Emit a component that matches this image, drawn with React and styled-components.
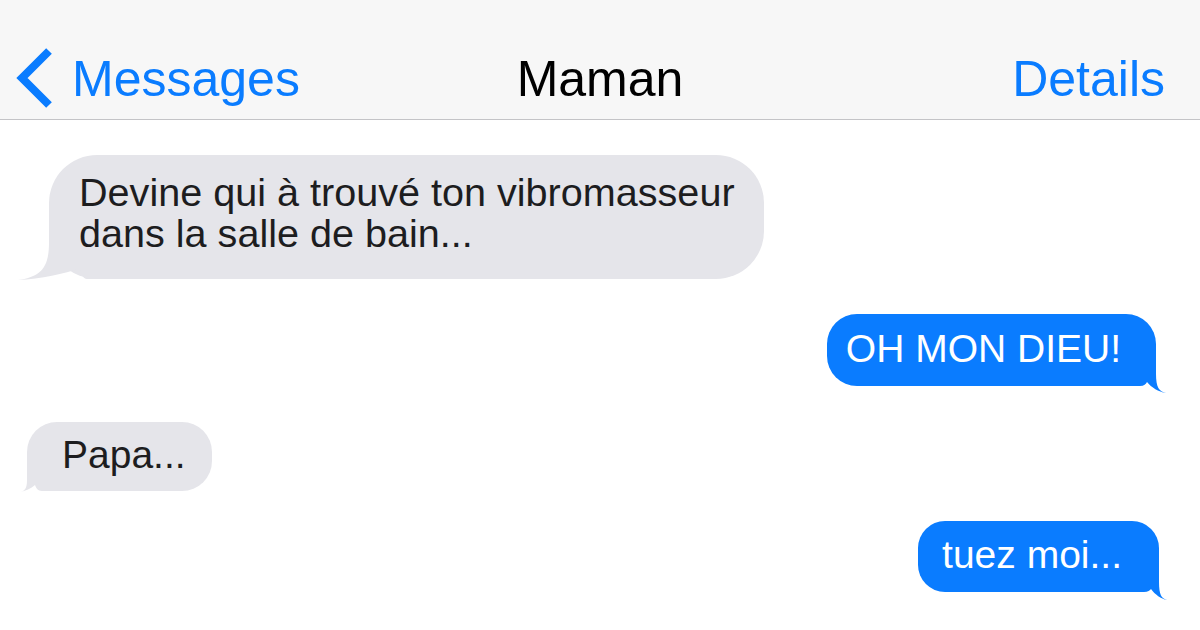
import React from "react";
import styled, { createGlobalStyle } from "styled-components";

const Global = createGlobalStyle`
  html, body { margin: 0; padding: 0; background: #ffffff; }
  body {
    font-family: "Liberation Sans", Arial, Helvetica, sans-serif;
    -webkit-font-smoothing: antialiased;
  }
`;

const BLUE = "#0a7cff";
const GRAY = "#e5e5ea";

const Screen = styled.div`
  width: 1200px;
  height: 630px;
  overflow: hidden;
  background: #ffffff;
`;

const Header = styled.header`
  box-sizing: border-box;
  height: 120px;
  padding: 46px 15px 9px 15px;
  background: #f7f7f7;
  border-bottom: 1px solid #c4c4c7;
  display: grid;
  grid-template-columns: minmax(0, 1fr) auto minmax(0, 1fr);
  align-items: center;
`;

const Back = styled.div`
  display: flex;
  align-items: center;
  gap: 17px;
  justify-self: start;
`;

const NavText = styled.span`
  font-size: 50px;
  line-height: 50px;
  padding-top: 2px;
  color: ${(p) => p.$color};
  justify-self: ${(p) => p.$align || "auto"};
  padding-right: ${(p) => (p.$align === "end" ? "20px" : "0")};
  white-space: nowrap;
`;

const Chevron = styled.svg`
  display: block;
  width: 40px;
  height: 64px;
`;

const Thread = styled.main`
  display: flex;
  flex-direction: column;
`;

const Row = styled.div`
  display: flex;
  justify-content: ${(p) => (p.$side === "out" ? "flex-end" : "flex-start")};
  margin-top: ${(p) => p.$mt}px;
  padding-left: ${(p) => (p.$side === "in" ? p.$inset : 0)}px;
  padding-right: ${(p) => (p.$side === "out" ? p.$inset : 0)}px;
`;

const Bubble = styled.div`
  position: relative;
  padding: ${(p) => p.$pad};
  border-radius: ${(p) => p.$r}px;
  background: ${(p) => (p.$side === "out" ? BLUE : GRAY)};
  color: ${(p) => (p.$side === "out" ? "#ffffff" : "#1d1d1f")};
  font-size: ${(p) => p.$size}px;
  line-height: 41px;
  white-space: nowrap;
`;

const BubbleText = styled.span`
  position: relative;
  z-index: 1;
`;

const Tail = styled.svg`
  position: absolute;
  z-index: 0;
  display: block;
  overflow: visible;
  bottom: ${(p) => -p.$dy}px;
  ${(p) =>
    p.$side === "in"
      ? `left: ${-p.$dx}px; transform: scaleX(-1);`
      : `right: ${-p.$dx}px;`}
`;

function tailPath({ r, dx, dy, flare, nd, nh }) {
  const e = r;
  const b = r;
  const W = e + dx;
  const H = b + dy;
  const c = b - flare;
  const ny = b - nh;
  const nx = e - nd;
  return [
    `M0 0 L${e} 0 L${e} ${c}`,
    `C${e} ${c + 0.7 * (H - c)} ${e + 0.3 * dx} ${H - 0.08 * (H - c)} ${W} ${H}`,
    `C${e + 0.25 * dx} ${H - 0.1 * (H - ny)} ${e - 0.5 * nd} ${ny + 0.5 * (H - ny)} ${nx} ${ny}`,
    `C${nx - 1} ${ny + nh * 0.5} ${nx - 3} ${b} ${nx - 7} ${b}`,
    `L0 ${b} Z`,
  ].join(" ");
}

function BubbleTail({ side, tail }) {
  const W = tail.r + tail.dx;
  const H = tail.r + tail.dy;
  return (
    <Tail
      $side={side}
      $dx={tail.dx}
      $dy={tail.dy}
      width={W}
      height={H}
      viewBox={`0 0 ${W} ${H}`}
    >
      <path d={tailPath(tail)} fill={side === "out" ? BLUE : GRAY} />
    </Tail>
  );
}

const messages = [
  {
    side: "in",
    mt: 35,
    inset: 49,
    size: 39.6,
    pad: "17px 29px 25px 30px",
    r: 48,
    tail: { r: 48, dx: 31, dy: 1, flare: 36, nd: 31, nh: 11 },
    lines: ["Devine qui à trouvé ton vibromasseur", "dans la salle de bain..."],
  },
  {
    side: "out",
    mt: 35,
    inset: 44,
    size: 39,
    pad: "14px 35px 17px 19px",
    r: 30,
    tail: { r: 30, dx: 10, dy: 7, flare: 12, nd: 9, nh: 4 },
    lines: ["OH MON DIEU!"],
  },
  {
    side: "in",
    mt: 36,
    inset: 27,
    size: 39,
    pad: "12px 26px 16px 35px",
    r: 30,
    tail: { r: 30, dx: 7, dy: 1, flare: 11, nd: 8, nh: 6 },
    lines: ["Papa..."],
  },
  {
    side: "out",
    mt: 30,
    inset: 41,
    size: 39,
    pad: "13px 37px 17px 24px",
    r: 27,
    tail: { r: 27, dx: 8, dy: 8, flare: 10, nd: 8, nh: 3 },
    lines: ["tuez moi..."],
  },
];

export default function App() {
  return (
    <Screen>
      <Global />
      <Header>
        <Back>
          <Chevron viewBox="0 0 40 64">
            <polyline
              points="34,5 7,32 34,59"
              fill="none"
              stroke={BLUE}
              strokeWidth="8"
              strokeLinecap="butt"
              strokeLinejoin="miter"
            />
          </Chevron>
          <NavText $color={BLUE}>Messages</NavText>
        </Back>
        <NavText $color="#000000">Maman</NavText>
        <NavText $color={BLUE} $align="end">
          Details
        </NavText>
      </Header>
      <Thread>
        {messages.map((m, i) => (
          <Row key={i} $side={m.side} $mt={m.mt} $inset={m.inset}>
            <Bubble $side={m.side} $pad={m.pad} $r={m.r} $size={m.size}>
              <BubbleText>
                {m.lines.map((l, j) => (
                  <React.Fragment key={j}>
                    {j > 0 && <br />}
                    {l}
                  </React.Fragment>
                ))}
              </BubbleText>
              <BubbleTail side={m.side} tail={m.tail} />
            </Bubble>
          </Row>
        ))}
      </Thread>
    </Screen>
  );
}
